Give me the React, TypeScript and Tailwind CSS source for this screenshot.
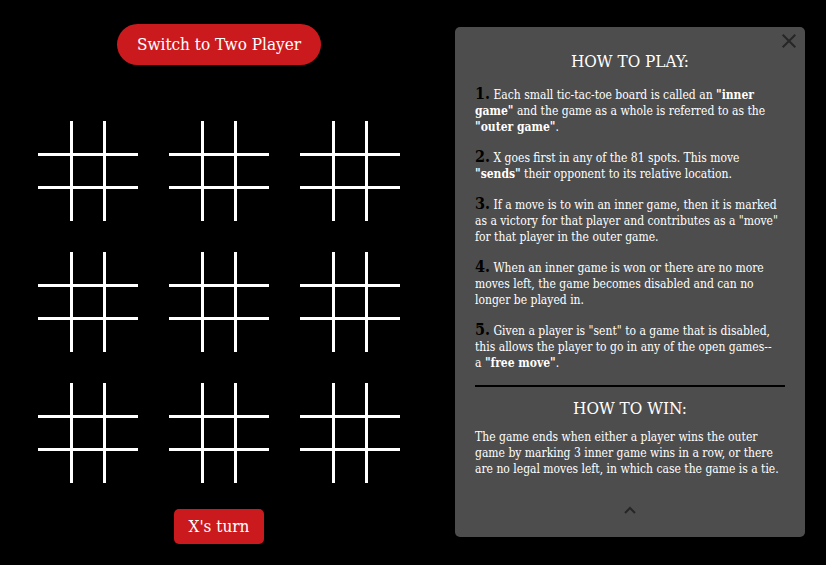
import type { ReactNode } from "react";

const cellBorders = [
  "border-r-3 border-b-3",
  "border-r-3 border-b-3",
  "border-b-3",
  "border-r-3 border-b-3",
  "border-r-3 border-b-3",
  "border-b-3",
  "border-r-3",
  "border-r-3",
  "",
];

function InnerBoard({ index }: { index: number }) {
  return (
    <div className="grid grid-cols-[35px_33px_32px] grid-rows-[35px_33px_32px]">
      {cellBorders.map((borders, cell) => (
        <button
          key={cell}
          type="button"
          aria-label={`Game ${index + 1}, spot ${cell + 1}`}
          className={`border-white ${borders}`}
        />
      ))}
    </div>
  );
}

function Rule({ number, children }: { number: number; children: ReactNode }) {
  return (
    <li>
      <span className="text-base leading-[18px] font-bold text-black">{number}.</span>{" "}
      {children}
    </li>
  );
}

export default function App() {
  return (
    <div className="flex min-h-screen items-start bg-black pr-[21px] font-['Roboto_Slab','DejaVu_Serif_Condensed','DejaVu_Serif',serif] text-white">
      <main className="flex flex-1 flex-col items-center pt-6">
        <button
          type="button"
          className="h-[41px] w-51 rounded-full bg-[#cb1a1d] text-[17px] whitespace-nowrap"
        >
          Switch to Two Player
        </button>
        <div className="mt-14 grid grid-cols-3 gap-[31px]">
          {Array.from({ length: 9 }, (_, i) => (
            <InnerBoard key={i} index={i} />
          ))}
        </div>
        <p className="mt-6.5 flex h-[35px] items-center rounded-[5px] bg-[#cb1a1d] px-[15px] text-[17px]">
          X's turn
        </p>
      </main>

      <aside className="mt-[27px] ml-[17px] w-[350px] rounded-[5px] bg-[#4d4d4d] px-5 pb-[18px] text-xs leading-4">
        <div className="-mr-3.5 flex h-6 items-start justify-end pt-1">
          <button type="button" aria-label="Close" className="p-0.5">
            <svg className="block" width="16" height="16" viewBox="0 0 16 16" fill="none" stroke="#262626" strokeWidth="2">
              <path d="M1.7 1.7l12.6 12.6M14.3 1.7 1.7 14.3" />
            </svg>
          </button>
        </div>
        <h2 className="text-center text-[17px] leading-5">HOW TO PLAY:</h2>
        <ol className="mt-3.5 flex flex-col gap-[13px]">
          <Rule number={1}>
            Each small tic-tac-toe board is called an <b>"inner game"</b> and the game as a whole is
            referred to as the <b>"outer game"</b>.
          </Rule>
          <Rule number={2}>
            X goes first in any of the 81 spots. This move <b>"sends"</b> their opponent to its
            relative location.
          </Rule>
          <Rule number={3}>
            If a move is to win an inner game, then it is marked as a victory for that player and
            contributes as a "move" for that player in the outer game.
          </Rule>
          <Rule number={4}>
            When an inner game is won or there are no more moves left, the game becomes disabled and
            can no longer be played in.
          </Rule>
          <Rule number={5}>
            Given a player is "sent" to a game that is disabled, this allows the player to go in any
            of the open games-- a&nbsp;<b>"free move"</b>.
          </Rule>
        </ol>
        <hr className="mt-3.5 border-t-2 border-black" />
        <h2 className="mt-[11px] text-center text-[17px] leading-5">HOW TO WIN:</h2>
        <p className="mt-[11px]">
          The game ends when either a player wins the outer game by marking 3 inner game wins in a
          row, or there are no legal moves left, in which case the game is a tie.
        </p>
        <div className="mt-6 flex justify-center">
          <button type="button" aria-label="Collapse" className="p-1">
            <svg className="block" width="12" height="10" viewBox="0 0 12 10" fill="none" stroke="#262626" strokeWidth="2">
              <path d="M1 8 6 3l5 5" />
            </svg>
          </button>
        </div>
      </aside>
    </div>
  );
}
